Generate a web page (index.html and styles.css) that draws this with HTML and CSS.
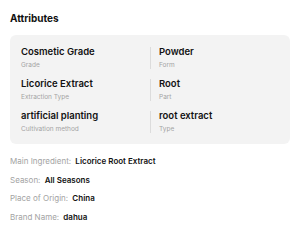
FILE: index.html
```html
<!DOCTYPE html>
<html lang="en">
<head>
  <meta charset="UTF-8">
  <title>Attributes</title>
  <link rel="stylesheet" href="styles.css">
</head>
<body>
  <div class="attributes">
    <h3>Attributes</h3>

    <div class="card">
      <div class="item">
        <div class="value">Cosmetic Grade</div>
        <div class="label">Grade</div>
      </div>
      <div class="item right">
        <div class="value">Powder</div>
        <div class="label">Form</div>
      </div>
      <div class="item">
        <div class="value">Licorice Extract</div>
        <div class="label">Extraction Type</div>
      </div>
      <div class="item right">
        <div class="value">Root</div>
        <div class="label">Part</div>
      </div>
      <div class="item">
        <div class="value">artificial planting</div>
        <div class="label">Cultivation method</div>
      </div>
      <div class="item right">
        <div class="value">root extract</div>
        <div class="label">Type</div>
      </div>
    </div>

    <ul class="details">
      <li><span class="key">Main Ingredient:</span> <b>Licorice Root Extract</b></li>
      <li><span class="key">Season:</span> <b>All Seasons</b></li>
      <li><span class="key">Place of Origin:</span> <b>China</b></li>
      <li><span class="key">Brand Name:</span> <b>dahua</b></li>
    </ul>
  </div>
</body>
</html>
```

FILE: styles.css
```css
:root {
  --bg-card: #f3f3f3;
  --font: #111;
  --muted: #a3a3a3;
  --line: #dcdcdc;
}

body {
  margin: 0;
  background: #fff;
  font-family: Inter, 'Noto Sans', sans-serif;
  color: var(--font);
}

.attributes {
  padding: 12px 10px 0;
}

h3 {
  margin: 0 0 11px;
  font-size: 10px;
  font-weight: 700;
  line-height: 12px;
}

.card {
  background: var(--bg-card);
  border-radius: 6px;
  padding: 12px 11px 11px;
  display: grid;
  grid-template-columns: 1fr 1fr;
  row-gap: 10px;
}

.item {
  height: 22px;
  display: flex;
  flex-direction: column;
  justify-content: space-between;
}

.item.right {
  border-left: 1px solid var(--line);
  padding-left: 8px;
}

.value {
  font-size: 9.5px;
  font-weight: 600;
  line-height: 11px;
  margin-top: -1px;
}

.label {
  font-size: 6.5px;
  line-height: 8px;
  color: var(--muted);
}

.details {
  list-style: none;
  margin: 12px 0 0;
  padding: 0;
  display: flex;
  flex-direction: column;
  gap: 8px;
}

.details li {
  font-size: 8px;
  line-height: 10.5px;
}

.details .key {
  color: var(--muted);
  margin-right: 2px;
}

.details b {
  font-weight: 600;
}
```
